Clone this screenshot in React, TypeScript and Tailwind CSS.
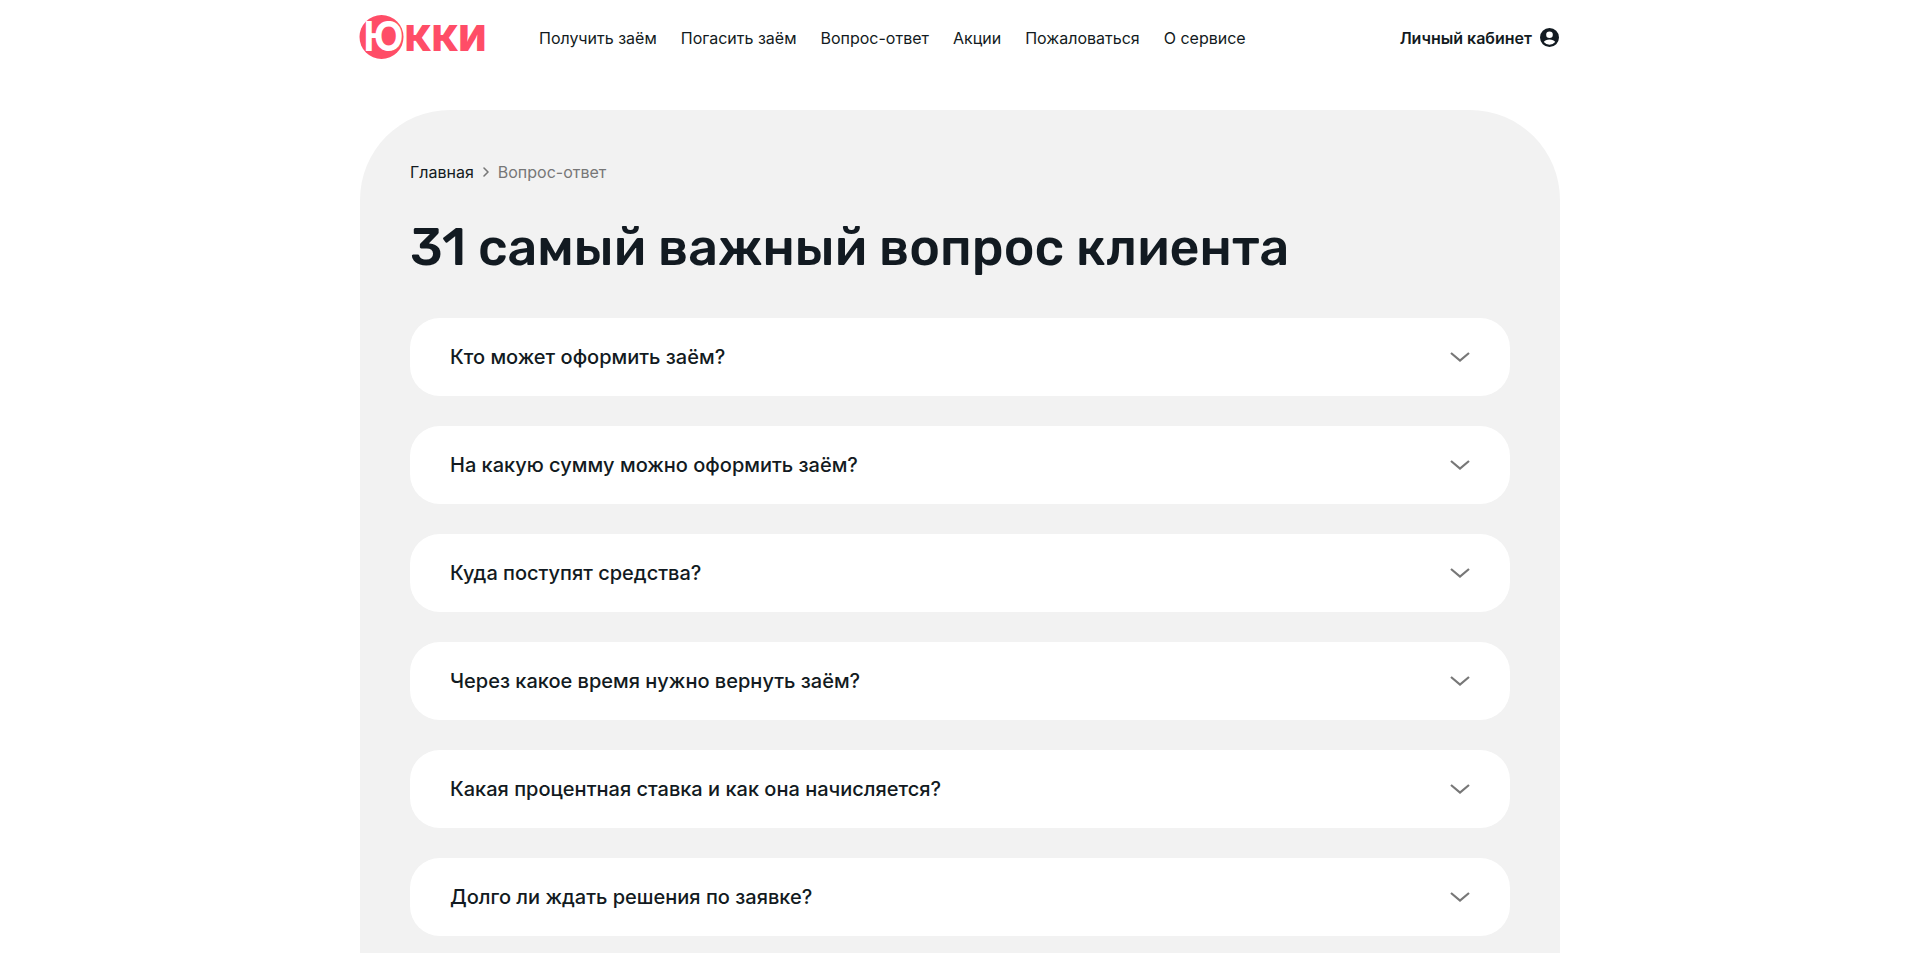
import { ChevronRight } from "lucide-react";

const navItems = ["Получить заём", "Погасить заём", "Вопрос-ответ", "Акции", "Пожаловаться", "О сервисе"];

const questions = [
  "Кто может оформить заём?",
  "На какую сумму можно оформить заём?",
  "Куда поступят средства?",
  "Через какое время нужно вернуть заём?",
  "Какая процентная ставка и как она начисляется?",
  "Долго ли ждать решения по заявке?",
];

const Logo = () => (
  <svg width="128" height="46" viewBox="0 0 128 46" className="block overflow-visible">
    <circle cx="21.5" cy="23" r="22" fill="#ff4d67" />
    <text x="3.5" y="36.5" fontFamily="Inter, sans-serif" fontWeight="700" fontSize="41" fill="#fff" textLength="40" lengthAdjust="spacingAndGlyphs">
      Ю
    </text>
    <text x="45" y="36.5" fontFamily="Inter, sans-serif" fontWeight="900" fontSize="36" fill="#ff4d67" textLength="81" lengthAdjust="spacingAndGlyphs">
      ККИ
    </text>
  </svg>
);

const UserIcon = () => (
  <svg width="19" height="19" viewBox="0 0 20 20" className="block">
    <path
      fill="#121a21"
      fillRule="evenodd"
      d="M10 0a10 10 0 1 0 0 20 10 10 0 0 0 0-20Zm0 3.6a3.5 3.5 0 1 1 0 7 3.5 3.5 0 0 1 0-7Zm0 14a7.8 7.8 0 0 1-6-2.8c.8-1.6 3.3-2.8 6-2.8s5.2 1.2 6 2.8a7.8 7.8 0 0 1-6 2.8Z"
    />
  </svg>
);

const Chevron = () => (
  <svg width="20" height="10" viewBox="0 0 20 10" fill="none" className="block">
    <path d="M1 1l9 7.5L19 1" stroke="#777" strokeWidth="2.2" />
  </svg>
);

export default function App() {
  return (
    <div className="h-[953px] overflow-hidden bg-white font-['Inter',sans-serif] text-[#121a21]">
      <div className="mx-auto w-[1200px]">
        {/* Header */}
        <header className="flex h-[75px] items-center">
          <div className="mb-[2px]">
            <Logo />
          </div>
          <nav className="ml-[51px] flex gap-6 text-base">
            {navItems.map((item) => (
              <a key={item} className="whitespace-nowrap">
                {item}
              </a>
            ))}
          </nav>
          <div className="ml-auto flex items-center gap-2 pr-[1px] text-base font-semibold">
            <span>Личный кабинет</span>
            <UserIcon />
          </div>
        </header>

        {/* Main panel */}
        <main className="mt-[35px] rounded-t-[90px] bg-[#f2f2f2] px-[50px] pt-[50px] pb-10">
          <div className="flex items-center text-base">
            <span>Главная</span>
            <ChevronRight className="mx-[4px] h-4 w-4 text-[#777]" strokeWidth={2.4} />
            <span className="text-[#777]">Вопрос-ответ</span>
          </div>
          <h1 className="mt-[30px] mb-[38px] font-['Rubik','Inter',sans-serif] text-[52px] leading-[66px] font-medium">
            31 самый важный вопрос клиента
          </h1>
          <div className="flex flex-col gap-[30px]">
            {questions.map((q) => (
              <div key={q} className="flex h-[78px] items-center justify-between rounded-[30px] bg-white pr-[30px] pl-10">
                <span className="text-xl font-medium">{q}</span>
                <div className="flex w-10 justify-center">
                  <Chevron />
                </div>
              </div>
            ))}
          </div>
        </main>
      </div>
    </div>
  );
}
